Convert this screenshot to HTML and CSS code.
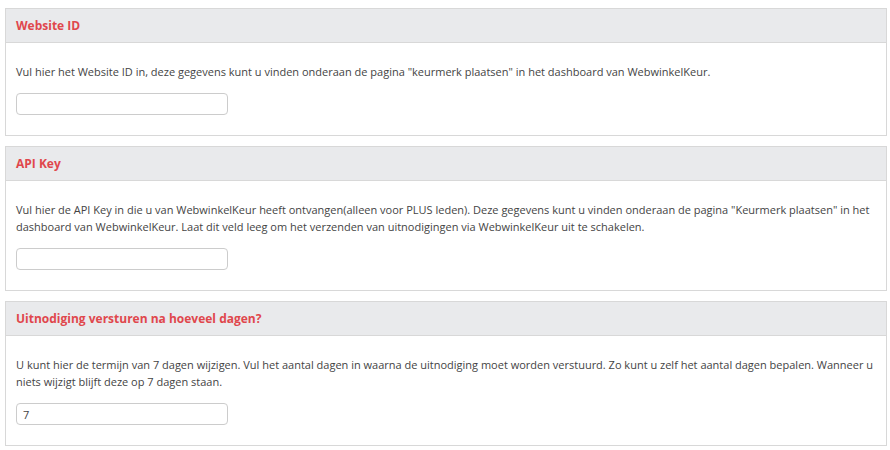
FILE: index.html
```html
<!DOCTYPE html>
<html lang="nl">
<head>
  <meta charset="UTF-8" />
  <meta name="viewport" content="width=device-width, initial-scale=1.0" />
  <title>WebwinkelKeur instellingen</title>
  <link rel="stylesheet" href="styles.css">
</head>
<body>
  <div class="panel">
    <div class="panel-heading">Website ID</div>
    <div class="panel-body">
      <p>Vul hier het Website ID in, deze gegevens kunt u vinden onderaan de pagina "keurmerk plaatsen" in het dashboard van WebwinkelKeur.</p>
      <input type="text" class="field" value="">
    </div>
  </div>
  <div class="panel">
    <div class="panel-heading">API Key</div>
    <div class="panel-body">
      <p>Vul hier de API Key in die u van WebwinkelKeur heeft ontvangen(alleen voor PLUS leden). Deze gegevens kunt u vinden onderaan de pagina "Keurmerk plaatsen" in het dashboard van WebwinkelKeur. Laat dit veld leeg om het verzenden van uitnodigingen via WebwinkelKeur uit te schakelen.</p>
      <input type="text" class="field" value="">
    </div>
  </div>
  <div class="panel">
    <div class="panel-heading">Uitnodiging versturen na hoeveel dagen?</div>
    <div class="panel-body">
      <p>U kunt hier de termijn van 7 dagen wijzigen. Vul het aantal dagen in waarna de uitnodiging moet worden verstuurd. Zo kunt u zelf het aantal dagen bepalen. Wanneer u niets wijzigt blijft deze op 7 dagen staan.</p>
      <input type="text" class="field" value="7">
    </div>
  </div>
</body>
</html>
```

FILE: styles.css
```css
* { box-sizing: border-box; }
body {
  margin: 0; padding: 8px 3px 0 5px;
  background: #fff; color: #444;
  font-family: 'Open Sans', sans-serif;
  font-size: 11px; line-height: 17px;
}

.panel {
  border: 1px solid #d8d8d8;
  margin-bottom: 10px;
  background: #fff;
}
.panel-heading {
  height: 34px; padding: 0 10px;
  display: flex; align-items: center;
  background: #e9eaec;
  border-bottom: 1px solid #d8d8d8;
  color: #e0474c; font-weight: bold;
  font-size: 12px;
}
.panel-body {
  padding: 20px 10px;
}
.panel-body p {
  margin: 0 0 13px;
}
.field {
  display: block;
  width: 212px; height: 22px;
  padding: 0 6px;
  border: 1px solid #ccc; border-radius: 4px;
  font-family: 'Open Sans', sans-serif;
  font-size: 11px; color: #444;
}
```
